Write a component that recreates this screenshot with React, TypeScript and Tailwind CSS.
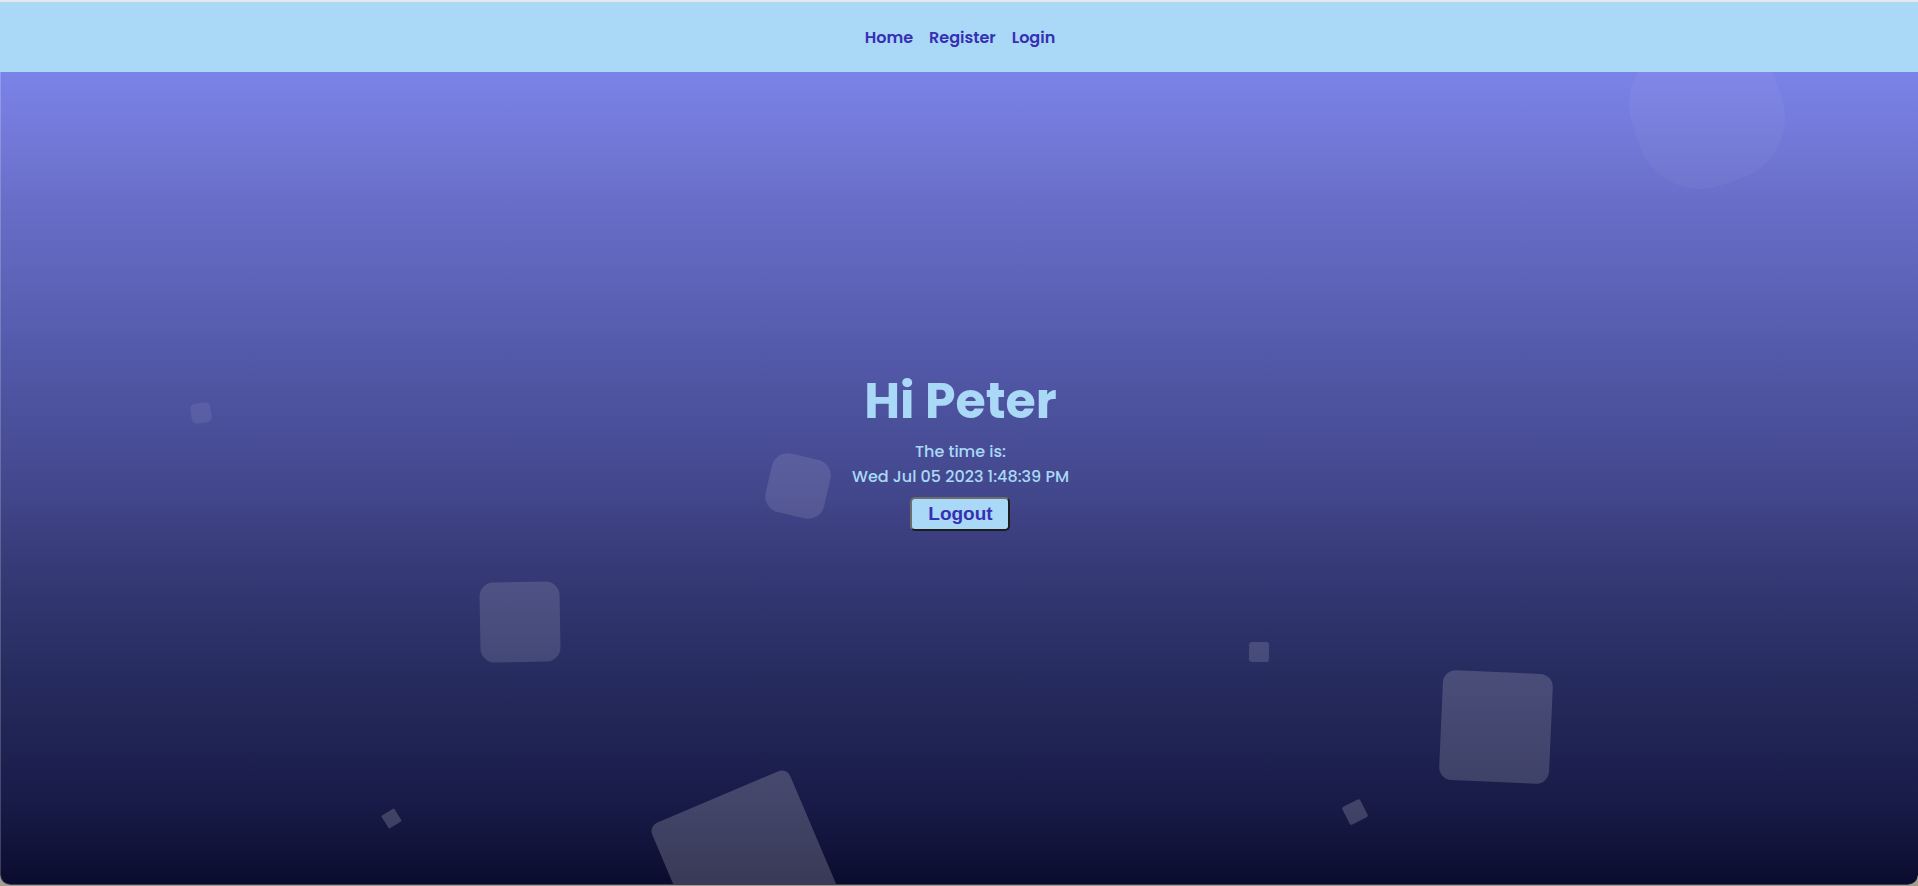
const links = [
  { label: "Home", href: "#home" },
  { label: "Register", href: "#register" },
  { label: "Login", href: "#login" },
];

const shapes = [
  "left-[85.1%] -top-[36px] size-[150px] rounded-[64px] -rotate-[19deg] bg-white/4",
  "left-[9.9%] top-[331px] size-5 rounded-[5px] -rotate-[8deg] bg-white/8",
  "left-[40%] top-[384px] size-[60px] rounded-[16px] rotate-[13deg] bg-white/11",
  "left-[25%] top-[510px] size-20 rounded-[14px] -rotate-1 bg-white/13",
  "left-[65.1%] top-[570px] size-5 rounded-[3px] rotate-1 bg-white/14",
  "left-[75.1%] top-[600px] size-[110px] rounded-[13px] rotate-[2.5deg] bg-white/16",
  "left-[70.1%] top-[730px] size-5 rounded-[2px] -rotate-[27deg] bg-white/18",
  "left-[20%] top-[739px] size-[15px] rounded-[1px] -rotate-[32deg] bg-white/18",
  "left-[35%] top-[719px] size-[150px] rounded-[9px] -rotate-[23deg] bg-white/19",
];

export default function App() {
  return (
    <div className="flex min-h-screen flex-col bg-[#a69c8f] pb-px font-['Poppins','Inter',sans-serif]">
      <div className="flex grow flex-col overflow-hidden rounded-b-[10px]">
        <header className="flex h-[72px] items-center justify-center border-t-2 border-[#e4e9ec] bg-[#a9d9f6] pt-0.5 pl-0.5">
          <nav className="flex gap-4 font-semibold text-[#372fb4]">
            {links.map((link) => (
              <a key={link.label} href={link.href}>
                {link.label}
              </a>
            ))}
          </nav>
        </header>
        <main className="relative flex grow flex-col items-center justify-center overflow-hidden rounded-b-[10px] border-b border-l border-white/20 bg-[linear-gradient(180deg,#7b83e8_0%,#666cc4_18%,#545aab_34%,#42468b_52%,#373b78_60%,#292e63_72%,#181b47_90%,#0a0c2e_100%)] bg-origin-border pl-0.5 text-[#a9d9f6]">
          <div aria-hidden="true" className="absolute inset-0">
            {shapes.map((shape) => (
              <div key={shape} className={`absolute ${shape}`} />
            ))}
          </div>
          <div className="relative flex flex-col items-center pb-[62px]">
            <h1 className="text-[49px] leading-[76px] font-bold">Hi Peter</h1>
            <p className="text-center leading-[25px] font-medium">
              The time is:
              <br />
              Wed Jul 05 2023 1:48:39 PM
            </p>
            <button
              type="button"
              className="mt-2 h-[34px] w-[100px] rounded-[5px] border-2 border-t-[#6d6d6d] border-r-[#1d1d1d] border-b-[#1d1d1d] border-l-[#6d6d6d] bg-[#a9d9f6] font-['Liberation_Sans',Arial,sans-serif] text-[19px] leading-6 font-bold text-[#372fb4]"
            >
              Logout
            </button>
          </div>
        </main>
      </div>
    </div>
  );
}
